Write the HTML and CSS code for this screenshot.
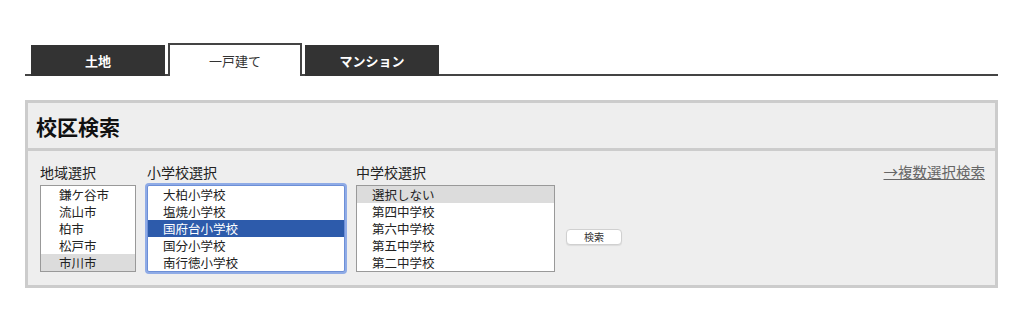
FILE: index.html
```html
<!DOCTYPE html>
<html lang="ja">
<head>
<meta charset="utf-8">
<link rel="stylesheet" href="styles.css">
</head>
<body>
<div class="page">
  <div class="tabs">
    <div class="tab dark">土地</div>
    <div class="tab active">一戸建て</div>
    <div class="tab dark">マンション</div>
  </div>
  <div class="panel">
    <div class="panel-head">校区検索</div>
    <div class="panel-body">
      <div class="col col-area">
        <div class="label">地域選択</div>
        <div class="list list-area">
          <div class="opt">鎌ケ谷市</div>
          <div class="opt">流山市</div>
          <div class="opt">柏市</div>
          <div class="opt">松戸市</div>
          <div class="opt sel-gray">市川市</div>
        </div>
      </div>
      <div class="col col-elem">
        <div class="label">小学校選択</div>
        <div class="list list-elem focus">
          <div class="opt">大柏小学校</div>
          <div class="opt">塩焼小学校</div>
          <div class="opt sel-blue">国府台小学校</div>
          <div class="opt">国分小学校</div>
          <div class="opt">南行徳小学校</div>
        </div>
      </div>
      <div class="col col-mid">
        <div class="label">中学校選択</div>
        <div class="list list-mid">
          <div class="opt sel-gray">選択しない</div>
          <div class="opt">第四中学校</div>
          <div class="opt">第六中学校</div>
          <div class="opt">第五中学校</div>
          <div class="opt">第二中学校</div>
        </div>
      </div>
      <div class="col col-btn">
        <button class="btn" type="button">検索</button>
      </div>
      <a class="multi" href="#">→複数選択検索</a>
    </div>
  </div>
</div>
</body>
</html>
```
FILE: styles.css
```css
* { box-sizing: border-box; }
html, body { margin: 0; padding: 0; background: #fff; }
body {
  font-family: "Noto Sans CJK JP", "Noto Sans", sans-serif;
  color: #222;
}
.page {
  padding: 43px 26px 0 25px;
}
.tabs {
  display: flex;
  align-items: flex-end;
  gap: 3px;
  padding-left: 6px;
  border-bottom: 2px solid #444;
  height: 33px;
}
.tab {
  width: 134px;
  margin-bottom: -2px;
  display: flex;
  align-items: center;
  justify-content: center;
  font-size: 13px;
}
.tab.dark {
  height: 31px;
  background: #333;
  color: #fff;
  font-weight: bold;
}
.tab.active {
  height: 33px;
  background: #fff;
  color: #333;
  border: 2px solid #444;
  border-bottom: none;
  padding-bottom: 1px;
}
.panel {
  margin-top: 24px;
  border: 3px solid #ccc;
  background: #eee;
}
.panel-head {
  height: 48px;
  padding-left: 8px;
  display: flex;
  align-items: center;
  font-size: 21px;
  font-weight: bold;
  color: #111;
  border-bottom: 3px solid #ccc;
}
.panel-body {
  display: flex;
  align-items: flex-start;
  gap: 11px;
  padding: 12px 10px 12px 12px;
  height: 134px;
}
.col { display: flex; flex-direction: column; }
.label {
  font-size: 14px;
  line-height: 18px;
  height: 18px;
  margin-bottom: 4px;
  color: #222;
}
.list {
  background: #fff;
  border: 1px solid #999;
  padding: 0;
}
.list-area { width: 96px; }
.list-elem { width: 198px; }
.list-mid { width: 199px; }
.list.focus {
  border-color: #6d8fd6;
  box-shadow: 0 0 0 2px #8fabe6;
  border-radius: 2px;
}
.opt {
  height: 17px;
  line-height: 17px;
  font-size: 12.5px;
  color: #222;
  padding-left: 15px;
  white-space: nowrap;
}
.list-area .opt { padding-left: 18px; }
.list-mid .opt { padding-left: 15px; }
.opt.sel-gray { background: #dcdcdc; }
.opt.sel-blue { background: #2d5bab; color: #fff; }
.col-btn { padding-top: 66px; }
.btn {
  width: 56px;
  height: 16px;
  padding: 0;
  border: 1px solid #d0d0d0;
  border-radius: 4px;
  background: #fff;
  font-family: inherit;
  font-size: 10px;
  line-height: 14px;
  color: #333;
  box-shadow: 0 1px 1px rgba(0,0,0,0.08);
}
.multi {
  margin-left: auto;
  font-size: 14.5px;
  line-height: 18px;
  color: #666;
  text-decoration: underline;
}
```
